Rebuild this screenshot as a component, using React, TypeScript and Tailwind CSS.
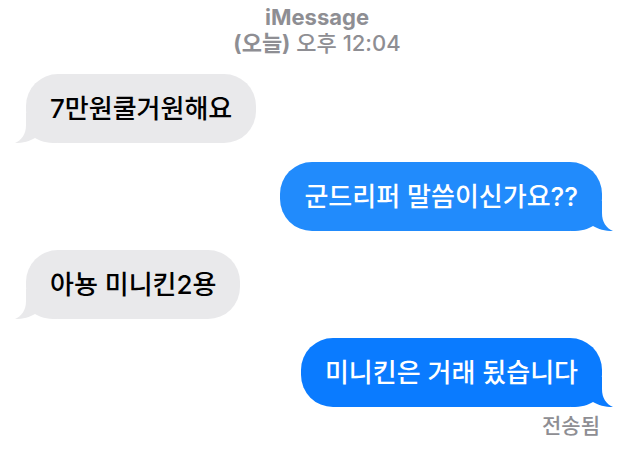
import React from "react";

const font = { fontFamily: 'Inter, "Noto Sans CJK KR", sans-serif' };

function Tail({ side, color }: { side: "left" | "right"; color: string }) {
  const pos = side === "left" ? "left-[-11px]" : "right-[-11px] -scale-x-100";
  return (
    <svg
      className={`absolute bottom-0 ${pos}`}
      width="42"
      height="30"
      viewBox="0 0 42 30"
    >
      <path
        d="M11 0 L11 12 C11 21 7 27 0 30 C8 30 15 28 20 25 C25 28 31 30 42 30 L42 0 Z"
        className={color}
      />
    </svg>
  );
}

function Bubble({
  text,
  side,
}: {
  text: string;
  side: "left" | "right";
}) {
  const isLeft = side === "left";
  const bg = isLeft ? "bg-[#e9e9eb]" : text.startsWith("군") ? "bg-[#218bfc]" : "bg-[#0a7bff]";
  const fill = isLeft ? "fill-[#e9e9eb]" : text.startsWith("군") ? "fill-[#218bfc]" : "fill-[#0a7bff]";
  return (
    <div className={`flex ${isLeft ? "justify-start" : "justify-end"}`}>
      <div
        className={`relative rounded-[32px] px-[24px] py-[20px] text-[26px] leading-[29px] font-medium ${bg} ${
          isLeft ? "text-black" : "text-white"
        }`}
      >
        <Tail side={side} color={fill} />
        <span className="relative">{text}</span>
      </div>
    </div>
  );
}

export default function App() {
  return (
    <div className="w-[634px] h-[457px] bg-white overflow-hidden" style={font}>
      <div className="pt-[4px] text-center text-[#8e8e93]">
        <div className="text-[22px] leading-[26px] font-bold">iMessage</div>
        <div className="text-[22px] leading-[26px] font-medium">
          <span className="font-bold">(오늘)</span> 오후 12:04
        </div>
      </div>

      <div className="pl-[26px] pr-[32px] mt-[18px] flex flex-col gap-[19px]">
        <Bubble side="left" text="7만원쿨거원해요" />
        <Bubble side="right" text="군드리퍼 말씀이신가요??" />
        <Bubble side="left" text="아뇽 미니킨2용" />
        <div>
          <Bubble side="right" text="미니킨은 거래 됬습니다" />
          <div className="mt-[8px] pr-[2px] text-right text-[21px] leading-[22px] font-medium text-[#8e8e93]">
            전송됨
          </div>
        </div>
      </div>
    </div>
  );
}
